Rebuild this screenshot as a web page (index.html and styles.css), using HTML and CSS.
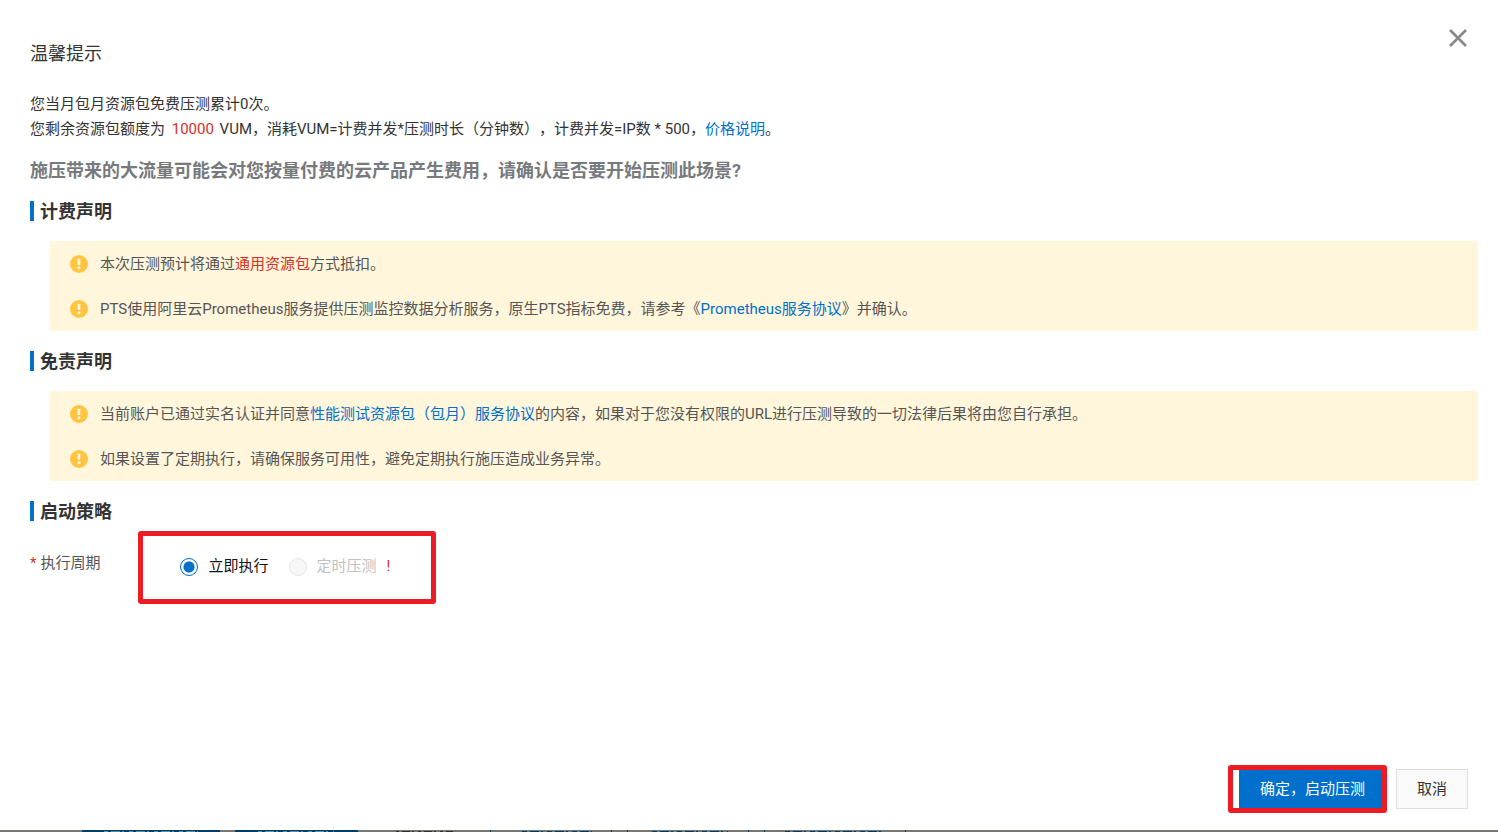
FILE: index.html
```html
<!DOCTYPE html>
<html lang="zh-CN">
<head>
<meta charset="utf-8">
<meta name="viewport" content="width=device-width, initial-scale=1">
<title>温馨提示</title>
<link rel="stylesheet" href="styles.css">
</head>
<body>
<svg class="defs" width="0" height="0" aria-hidden="true">
  <symbol id="warn" viewBox="0 0 18 18">
    <circle cx="9" cy="9" r="9" fill="#ffc440"/>
    <path d="M7.500 3.800h3l-.3 6.200H7.800z" fill="#fff6db"/>
    <rect x="7.500" y="11.400" width="3" height="2.800" rx="1" fill="#fff6db"/>
  </symbol>
</svg>
<main class="dialog" role="dialog" aria-labelledby="dialog-title">
  <header class="dialog-header">
    <h1 class="dialog-title" id="dialog-title">温馨提示</h1>
    <button class="close" type="button" aria-label="关闭">
      <svg width="18" height="18" viewBox="0 0 18 18" aria-hidden="true"><path d="M1 1L17 17M17 1L1 17" stroke="#888" stroke-width="2.600" fill="none"/></svg>
    </button>
  </header>
  <div class="dialog-body">
    <div class="summary">
      <p>您当月包月资源包免费压测累计0次。</p>
      <p>您剩余资源包额度为 <span class="quota">10000</span> VUM，消耗VUM=计费并发*压测时长（分钟数），计费并发=IP数 * 500，<a href="#price">价格说明</a>。</p>
    </div>
    <p class="question">施压带来的大流量可能会对您按量付费的云产品产生费用，请确认是否要开始压测此场景?</p>

    <h2 class="section-title">计费声明</h2>
    <ul class="notice">
      <li><svg class="icon" aria-hidden="true"><use href="#warn"/></svg><span class="notice-text">本次压测预计将通过<span class="danger">通用资源包</span>方式抵扣。</span></li>
      <li><svg class="icon" aria-hidden="true"><use href="#warn"/></svg><span class="notice-text">PTS使用阿里云Prometheus服务提供压测监控数据分析服务，原生PTS指标免费，请参考《<a href="#prometheus">Prometheus服务协议</a>》并确认。</span></li>
    </ul>

    <h2 class="section-title">免责声明</h2>
    <ul class="notice">
      <li><svg class="icon" aria-hidden="true"><use href="#warn"/></svg><span class="notice-text">当前账户已通过实名认证并同意<a href="#terms">性能测试资源包（包月）服务协议</a>的内容，如果对于您没有权限的URL进行压测导致的一切法律后果将由您自行承担。</span></li>
      <li><svg class="icon" aria-hidden="true"><use href="#warn"/></svg><span class="notice-text">如果设置了定期执行，请确保服务可用性，避免定期执行施压造成业务异常。</span></li>
    </ul>

    <h2 class="section-title">启动策略</h2>
    <div class="field">
      <span class="field-label" id="period-label"><span class="required">*</span>执行周期</span>
      <div class="options" role="radiogroup" aria-labelledby="period-label">
        <label class="option"><input type="radio" name="period" checked>立即执行</label>
        <label class="option is-disabled"><input type="radio" name="period" disabled>定时压测</label>
        <span class="alert">!</span>
      </div>
    </div>
  </div>
  <footer class="dialog-footer">
    <div class="highlighted"><button class="btn btn-primary" type="button">确定，启动压测</button></div>
    <button class="btn" type="button">取消</button>
  </footer>
</main>
<div class="backdrop-edge" aria-hidden="true">
  <svg width="920" height="2" viewBox="0 0 920 2">
    <path fill="#003d68" d="M82 0h138v2H82zM235 0h123v2H235z"/>
    <path stroke="#6f8790" stroke-width="1" stroke-dasharray="4 3 9 2 2 5" d="M104 1.500H198M258 1.500H334"/>
    <path stroke="#30302c" stroke-width="1" stroke-dasharray="3 3 8 2 2 4" d="M396 1.500H453"/>
    <path stroke="#003d68" stroke-width="1" stroke-dasharray="5 3 9 2 2 4" d="M522 1.500H592M652 1.500H728M785 1.500H882"/>
    <path fill="#003d68" d="M490 0h1v2h-1zM611 0h1v2h-1zM627 0h1v2h-1zM748 0h1v2h-1zM764 0h1v2h-1zM905 0h1v2h-1z"/>
  </svg>
</div>
</body>
</html>
```
FILE: styles.css
```css
* {
  box-sizing: border-box;
}

body {
  margin: 0;
  min-height: 100vh;
  display: flex;
  flex-direction: column;
  background: #fff;
  color: #333;
  font: 15px/25px Roboto, "Noto Sans CJK SC", sans-serif;
  text-spacing-trim: space-all;
}

h1, h2, p, ul {
  margin: 0;
  padding: 0;
}

a {
  color: #0070cc;
  text-decoration: none;
}

button {
  font: inherit;
  cursor: pointer;
}

.defs {
  position: absolute;
}

.dialog {
  flex: 1;
  display: flex;
  flex-direction: column;
}

.dialog-header {
  display: flex;
  justify-content: space-between;
  align-items: flex-start;
  padding: 24px 27px 0 30px;
}

.dialog-title {
  padding-top: 17px;
  font-size: 18px;
  font-weight: 400;
  line-height: 25px;
}

.close {
  display: flex;
  padding: 5px 4px;
  border: 0;
  background: none;
}

.dialog-body {
  flex: 1;
  padding: 26px 20px 20px 30px;
}

.quota {
  margin: 0 2px 0 3px;
  color: #d93026;
}

.question {
  margin: 16px 0 18px;
  color: #777a7d;
  font-size: 18px;
  font-weight: 700;
}

.section-title {
  padding: 2px 0 0 6px;
  border-left: 4px solid #0070cc;
  font-size: 18px;
  font-weight: 700;
  line-height: 18px;
}

.notice {
  margin: 20px 0 20px 20px;
  background: #fff6db;
  color: #555;
  list-style: none;
}

.notice li {
  display: flex;
  align-items: center;
  gap: 12px;
  padding: 10px 20px;
}

.notice-text {
  padding-top: 2px;
  line-height: 23px;
}

.icon {
  flex: none;
  width: 18px;
  height: 18px;
}

.danger, .required, .alert {
  color: #d93026;
}

.field {
  display: flex;
  align-items: flex-start;
  gap: 38px;
  margin-top: 10px;
}

.field-label {
  padding-top: 20px;
  color: #555;
}

.required {
  margin-right: 4px;
}

.options {
  display: flex;
  align-items: center;
  gap: 20px;
  padding: 18px 41px 20px 37px;
  border: 5px solid #ed1c24;
  border-radius: 3px;
  line-height: 25px;
}

.option {
  display: flex;
  align-items: center;
  gap: 10px;
  color: #111;
}

.option input {
  appearance: none;
  width: 18px;
  height: 18px;
  margin: 0;
  border: 1px solid #0070cc;
  border-radius: 50%;
  background: radial-gradient(circle, #0070cc 5px, #fff 6px);
}

.option input:disabled {
  border-color: #e6e6e6;
  background: #f7f7f7;
}

.is-disabled {
  color: #c1c1c1;
}

.alert {
  margin-left: -10px;
}

.dialog-footer {
  display: flex;
  justify-content: flex-end;
  gap: 10px;
  padding: 0 30px 21px;
}

.btn {
  height: 40px;
  padding: 0 20px;
  border: 1px solid #dedede;
  background: #fafafa;
  color: #333;
}

.btn-primary {
  border-color: #0070cc;
  background: #0070cc;
  color: #fff;
}

.highlighted {
  position: relative;
}

.highlighted::after {
  content: "";
  position: absolute;
  inset: -4px -1px -4px -11px;
  border: 5px solid #ed1c24;
  border-radius: 3px;
  pointer-events: none;
}

.backdrop-edge {
  display: flex;
  height: 2px;
  overflow: hidden;
  background: #777772;
}
```
